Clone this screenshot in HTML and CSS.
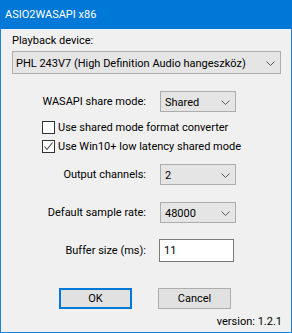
FILE: index.html
```html
<!DOCTYPE html>
<html>
<head>
<meta charset="utf-8">
<link rel="stylesheet" href="styles.css">
</head>
<body>
<div class="window">
  <div class="titlebar">ASIO2WASAPI x86</div>
  <div class="client">
    <div class="label-top">Playback device:</div>
    <div class="combo combo-wide"><span class="combo-text">PHL 243V7 (High Definition Audio hangeszköz)</span><svg class="chev" width="9" height="5" viewBox="0 0 9 5"><polyline points="0.5,0.5 4.5,4.5 8.5,0.5" fill="none" stroke="#5a5a5a" stroke-width="1"/></svg></div>

    <div class="row row-share"><span class="lbl">WASAPI share mode:</span><div class="combo combo-small"><span class="combo-text">Shared</span><svg class="chev" width="9" height="5" viewBox="0 0 9 5"><polyline points="0.5,0.5 4.5,4.5 8.5,0.5" fill="none" stroke="#5a5a5a" stroke-width="1"/></svg></div></div>

    <div class="check check-1"><span class="box"></span><span>Use shared mode format converter</span></div>
    <div class="check check-2"><span class="box"><svg width="11" height="11" viewBox="0 0 11 11"><polyline points="1.5,5.5 4,8.5 9.5,1.5" fill="none" stroke="#444" stroke-width="1.1"/></svg></span><span>Use Win10+ low latency shared mode</span></div>

    <div class="row row-out"><span class="lbl">Output channels:</span><div class="combo combo-small"><span class="combo-text">2</span><svg class="chev" width="9" height="5" viewBox="0 0 9 5"><polyline points="0.5,0.5 4.5,4.5 8.5,0.5" fill="none" stroke="#5a5a5a" stroke-width="1"/></svg></div></div>

    <div class="row row-rate"><span class="lbl">Default sample rate:</span><div class="combo combo-small"><span class="combo-text">48000</span><svg class="chev" width="9" height="5" viewBox="0 0 9 5"><polyline points="0.5,0.5 4.5,4.5 8.5,0.5" fill="none" stroke="#5a5a5a" stroke-width="1"/></svg></div></div>

    <div class="row row-buf"><span class="lbl">Buffer size (ms):</span><div class="edit">11</div></div>

    <div class="buttons"><div class="btn btn-default">OK</div><div class="btn">Cancel</div></div>

    <div class="version">version: 1.2.1</div>
  </div>
</div>
</body>
</html>
```

FILE: styles.css
```css
* { box-sizing: border-box; }
html, body { margin: 0; padding: 0; background: #f0f0f0; }
body {
  font-family: Roboto, "Noto Sans", sans-serif;
  font-size: 11px;
  color: #000;
}
.window {
  width: 292px;
  height: 333px;
  border: 1px solid #1883d7;
  border-top: none;
  background: #f0f0f0;
  display: flex;
  flex-direction: column;
}
.titlebar {
  height: 29px;
  margin: 0 -1px;
  background: #0078d7;
  color: #fff;
  line-height: 29px;
  padding-left: 5px;
  font-size: 11px;
}
.client {
  padding: 4px 9px 0 11px;
  display: flex;
  flex-direction: column;
}
.label-top {
  height: 15px;
  line-height: 15px;
}
.combo {
  position: relative;
  display: flex;
  align-items: center;
  background: #e5e5e5;
  border: 1px solid #adadad;
  padding-top: 1px;
}
.combo-text {
  line-height: 15px;
  white-space: nowrap;
}
.chev {
  position: absolute;
  right: 5px;
  top: 50%;
  margin-top: -2px;
}
.combo-wide {
  margin-top: 3px;
  width: 269px;
  height: 23px;
  padding-left: 3px;
}
.row {
  display: flex;
  align-items: center;
}
.lbl {
  width: 134px;
  text-align: right;
  line-height: 15px;
  white-space: nowrap;
}
.combo-small {
  margin-left: 14px;
  width: 76px;
  height: 21px;
  padding-left: 4px;
}
.row-share { margin-top: 17px; }
.check {
  display: flex;
  align-items: center;
  margin-left: 30px;
  height: 13px;
  line-height: 15px;
}
.check-1 { margin-top: 9px; }
.check-2 { margin-top: 6px; }
.box {
  width: 13px;
  height: 13px;
  border: 1px solid #333;
  background: #fff;
  margin-right: 3px;
  display: flex;
  align-items: center;
  justify-content: center;
  flex: none;
}
.row-out { margin-top: 11px; }
.row-rate { margin-top: 17px; }
.row-buf { margin-top: 16px; }
.edit {
  margin-left: 13px;
  width: 75px;
  height: 23px;
  border: 1px solid #7a7a7a;
  background: #fff;
  padding-left: 4px;
  line-height: 21px;
}
.buttons {
  display: flex;
  gap: 26px;
  margin-top: 26px;
  padding-left: 47px;
}
.btn {
  width: 73px;
  height: 21px;
  background: #e1e1e1;
  border: 1px solid #adadad;
  text-align: center;
  line-height: 19px;
}
.btn-default {
  border: 2px solid #0078d7;
  line-height: 17px;
}
.version {
  margin-top: 5px;
  text-align: right;
  line-height: 15px;
}
```
